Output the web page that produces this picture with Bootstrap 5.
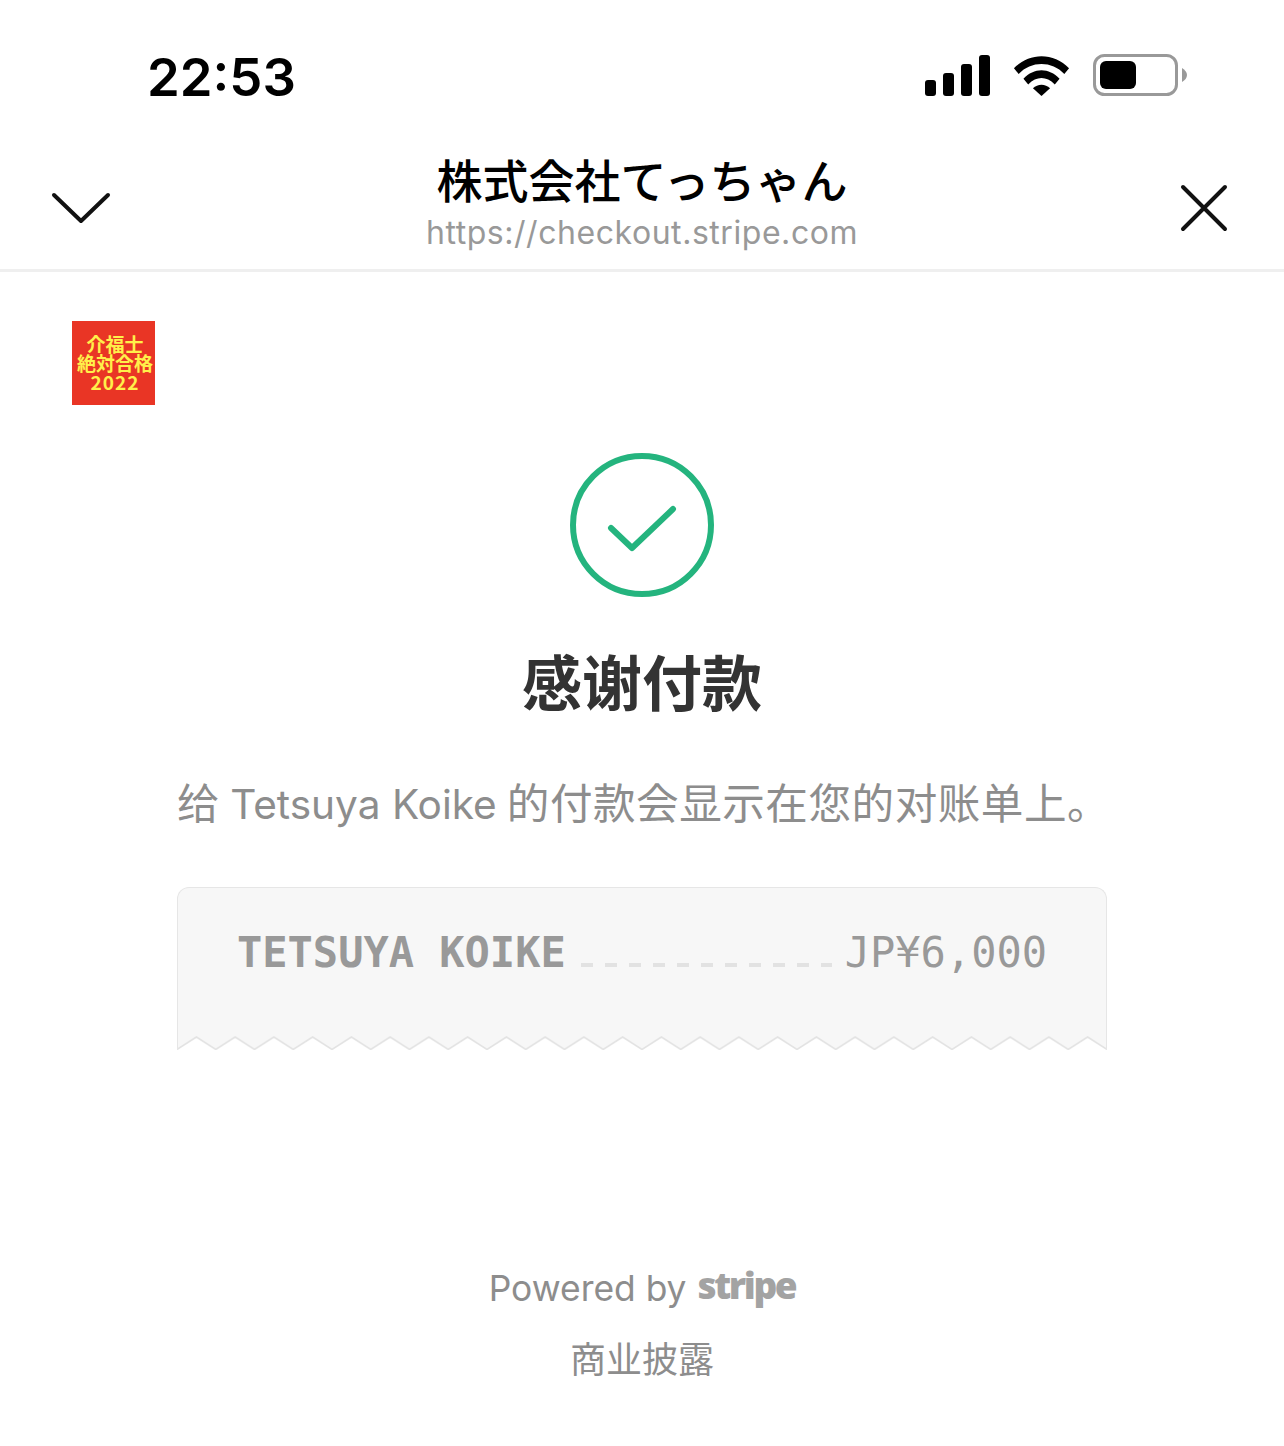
<!DOCTYPE html>
<html lang="ja">
<head>
    <meta charset="UTF-8">
    <meta name="viewport" content="width=device-width, initial-scale=1.0">
    <title>Stripe checkout</title>
    <link href="https://cdn.jsdelivr.net/npm/bootstrap@5.3.0/dist/css/bootstrap.min.css" rel="stylesheet">
    <style>
        body { background: #fff; font-family: "Inter", "Noto Sans CJK SC", sans-serif; }
        .status-bar { height: 135px; padding: 18px 97px 0 147px; }
        .clock { font-family: "Inter", sans-serif; font-weight: 600; font-size: 52.6px; line-height: 1; color: #000; white-space: nowrap; margin-top: 2px; }
        .status-icons { gap: 23px; margin-top: -3px; }
        .head-bar { height: 137px; padding: 0 56px 0 50px; border-bottom: 3px solid #efefef; }
        .head-left { width: 166px; margin-top: 12px; }
        .head-right { width: 160px; margin-top: 12px; }
        .head-title { font-family: "Noto Sans CJK JP", sans-serif; font-weight: 500; font-size: 46px; line-height: 62px; color: #000; white-space: nowrap; margin-top: -6px; }
        .head-url { font-family: "Inter", sans-serif; font-size: 32px; line-height: 38px; letter-spacing: .55px; color: #999; white-space: nowrap; margin-top: 5px; }
        .shop-logo { width: 83px; height: 84px; background: #e93525; color: #fff04a; margin: 49px 0 0 72px; padding: 13px 0 0 3px; font-family: "Noto Sans CJK JP", sans-serif; font-weight: 700; font-size: 19px; line-height: 19px; white-space: nowrap; text-align: center; }
        .logo-year { letter-spacing: 1px; }
        .tick-wrap { margin-top: 48px; }
        .thanks { font-family: "Noto Sans CJK SC", sans-serif; font-weight: 700; font-size: 60px; line-height: 80px; color: #333; margin: 43px 0 0; }
        .pay-note { width: 930px; margin: 53px auto 0; font-family: "Noto Sans CJK SC", sans-serif; font-size: 42.6px; letter-spacing: .5px; line-height: 56px; color: #8d8d8d; white-space: nowrap; text-align: left; }
        .pay-name { font-family: "Inter", sans-serif; font-size: 40.6px; letter-spacing: 0; }
        .receipt { width: 930px; margin: 54px auto 0; }
        .receipt-top { height: 149px; background: #f7f7f7; border: 1px solid #e6e6e6; border-bottom: 0; border-radius: 12px 12px 0 0; padding: 37px 59px 0 59px; font-family: "DejaVu Sans Mono", monospace; font-size: 42px; line-height: 56px; color: #999; }
        .receipt-name { font-weight: 700; }
        .receipt-dots { height: 4px; margin: 38px 13px 0 15px; background-image: repeating-linear-gradient(90deg, #e2e2e2 0 12px, transparent 12px 24px); }
        .receipt-edge { display: block; }
        .pay-foot { margin-top: 208px; color: #8d8d8d; font-size: 35.4px; line-height: 54px; white-space: nowrap; }
        .stripe-word { font-family: "Open Sans", sans-serif; font-weight: 800; font-size: 37px; letter-spacing: -2.4px; color: #a3a3a3; margin-left: 1px; vertical-align: 2px; }
        .legal { font-family: "Noto Sans CJK SC", sans-serif; font-size: 36px; line-height: 54px; color: #8d8d8d; margin-top: 14px; }
    </style>
</head>
<body>
    <!-- Status bar -->
    <div class="status-bar d-flex justify-content-between align-items-center">
        <div class="clock">22:53</div>
        <div class="status-icons d-flex align-items-center">
            <svg width="65" height="41" viewBox="0 0 65 41" fill="#000">
                <rect x="0" y="25" width="11" height="16" rx="3"/>
                <rect x="18" y="18" width="11" height="23" rx="3"/>
                <rect x="36" y="9" width="11" height="32" rx="3"/>
                <rect x="54" y="0" width="11" height="41" rx="3"/>
            </svg>
            <svg width="57" height="42" viewBox="0 0 60 44" fill="#000">
                <path d="M1 15 C17 -2 43 -2 59 15 L54 21 C41 7 19 7 6 21 Z"/>
                <path d="M11 26 C22 14 38 14 49 26 L44 32 C35 23 25 23 16 32 Z"/>
                <path d="M21 36 C26 31 34 31 39 36 L30 44 Z"/>
            </svg>
            <svg width="94" height="42" viewBox="0 0 94 42">
                <rect x="1.5" y="1.5" width="82" height="39" rx="10" fill="none" stroke="#999" stroke-width="3"/>
                <rect x="7" y="7" width="36" height="28" rx="6" fill="#000"/>
                <path d="M89 14 C92 16 94 18 94 21 C94 24 92 26 89 28 Z" fill="#999"/>
            </svg>
        </div>
    </div>

    <!-- Browser header -->
    <div class="head-bar d-flex justify-content-between align-items-center">
        <div class="head-left">
            <svg class="d-block" width="62" height="34" viewBox="0 0 62 34" fill="none" stroke="#111" stroke-width="4" stroke-linecap="round" stroke-linejoin="round">
                <path d="M4 4 L31 30 L58 4"/>
            </svg>
        </div>
        <div class="text-center flex-grow-1">
            <div class="head-title">株式会社てっちゃん</div>
            <div class="head-url">https://checkout.stripe.com</div>
        </div>
        <div class="head-right d-flex justify-content-end">
            <svg class="d-block" width="48" height="48" viewBox="0 0 48 48" fill="none" stroke="#111" stroke-width="4" stroke-linecap="round">
                <path d="M3 3 L45 45 M45 3 L3 45"/>
            </svg>
        </div>
    </div>

    <!-- Shop logo -->
    <div class="shop-logo">介福士<br>絶対合格<br><span class="logo-year">2022</span></div>

    <!-- Confirmation -->
    <div class="text-center">
        <div class="tick-wrap">
            <svg width="144" height="144" viewBox="0 0 144 144" fill="none" stroke="#24b47e" stroke-linecap="round" stroke-linejoin="round">
                <circle cx="72" cy="72" r="69" stroke-width="6"/>
                <path d="M41 75 L62 95 L103 56" stroke-width="6"/>
            </svg>
        </div>
        <h1 class="thanks">感谢付款</h1>
        <p class="pay-note">给 <span class="pay-name">Tetsuya Koike</span> 的付款会显示在您的对账单上。</p>

        <div class="receipt">
            <div class="receipt-top d-flex align-items-start">
                <span class="receipt-name">TETSUYA KOIKE</span>
                <span class="receipt-dots flex-grow-1"></span>
                <span>JP¥6,000</span>
            </div>
            <svg class="receipt-edge" width="930" height="14" viewBox="0 0 930 14">
                <defs>
                    <pattern id="teeth" width="38.75" height="14" patternUnits="userSpaceOnUse">
                        <rect width="38.75" height="14" fill="#f7f7f7"/>
                        <path d="M0 13.5 L19.4 1 L38.75 13.5 L38.75 15 L0 15 Z" fill="#fff" stroke="#e3e3e3" stroke-width="1.5"/>
                    </pattern>
                </defs>
                <rect width="930" height="14" fill="url(#teeth)"/>
                <path d="M.5 0 V14 M929.5 0 V14" stroke="#e6e6e6" fill="none"/>
            </svg>
        </div>

        <div class="pay-foot">Powered by <span class="stripe-word">stripe</span></div>
        <div class="legal">商业披露</div>
    </div>

    <script src="https://cdn.jsdelivr.net/npm/bootstrap@5.3.0/dist/js/bootstrap.bundle.min.js"></script>
</body>
</html>
